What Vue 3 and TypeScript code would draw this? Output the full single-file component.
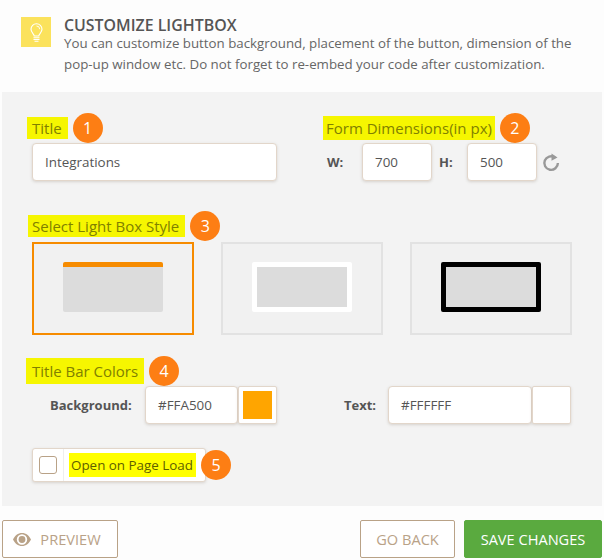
<script setup lang="ts">
const styles = ['bar', 'white', 'black']
</script>

<template>
  <div class="page">
    <header class="head">
      <div class="tip">
        <svg width="13" height="19" viewBox="0 0 13 19" fill="none" stroke="#fff" stroke-width="1.100">
          <path d="M4.200 13c0-1.900-3.200-3.300-3.200-6.700a5.500 5.500 0 0 1 11 0c0 3.400-3.200 4.800-3.200 6.700z" />
          <path d="M6.500 3a3.200 3.200 0 0 1 3.200 3.200" stroke-width="0.900" />
          <path d="M3.500 14.800h6M3.500 16.500h6M4.500 18.300h4" />
        </svg>
      </div>
      <div class="head-text">
        <h1>CUSTOMIZE LIGHTBOX</h1>
        <p>You can customize button background, placement of the button, dimension of the pop-up window etc. Do not forget to re-embed your code after customization.</p>
      </div>
    </header>

    <main class="panel">
      <div class="row-top">
        <section class="col-title">
          <div class="label-line"><span class="mark mark-title">Title&nbsp;</span><span class="badge">1</span></div>
          <div class="field title-field">Integrations</div>
        </section>
        <section class="col-dim">
          <div class="label-line"><span class="mark mark-form">Form Dimensions(in px)</span><span class="badge">2</span></div>
          <div class="dims">
            <b class="w-label">W:</b>
            <div class="field dim">700</div>
            <b class="h-label">H:</b>
            <div class="field dim">500</div>
            <svg class="reset" width="18" height="22" viewBox="0 0 18 22" fill="none">
              <path d="M12.900 6.400a6.800 6.800 0 1 0 3 5.600" stroke="#999" stroke-width="2.400" />
              <path d="M9.500 2.600l6 3.800-6 3.400z" fill="#999" />
            </svg>
          </div>
        </section>
      </div>

      <section class="style-section">
        <div class="label-line"><span class="mark mark-style">Select Light Box Style</span><span class="badge">3</span></div>
        <div class="cards">
          <div v-for="(s, i) in styles" :key="s" class="card" :class="{ active: i === 0 }">
            <div class="mini" :class="s"></div>
          </div>
        </div>
      </section>

      <section class="colors">
        <div class="label-line"><span class="mark mark-colors">Title Bar Colors</span><span class="badge">4</span></div>
        <div class="color-row">
          <b class="bg-label">Background:</b>
          <div class="field hex bg-hex">#FFA500</div>
          <div class="swatch"><i class="orange"></i></div>
          <b class="text-label">Text:</b>
          <div class="field hex text-hex">#FFFFFF</div>
          <div class="swatch"></div>
        </div>
      </section>

      <div class="load-line">
        <div class="load">
          <div class="check-cell"><span class="check"></span></div>
          <span class="mark load-mark">Open on Page Load</span>
        </div>
        <span class="badge">5</span>
      </div>
    </main>

    <footer class="foot">
      <button class="btn preview">
        <svg width="18" height="13" viewBox="0 0 18 13" fill="#b9a287">
          <path fill-rule="evenodd" d="M9 0c4 0 7.300 2.700 9 6.500-1.700 3.800-5 6.500-9 6.500s-7.300-2.700-9-6.500C1.700 2.700 5 0 9 0zm0 1.300a5.200 5.200 0 1 0 0 10.400 5.200 5.200 0 0 0 0-10.400z" />
          <circle cx="9" cy="6.500" r="3.400" />
        </svg>
        PREVIEW
      </button>
      <div class="foot-right">
        <button class="btn back">GO BACK</button>
        <button class="btn save">SAVE CHANGES</button>
      </div>
    </footer>
  </div>
</template>

<style>
html, body { margin: 0; background: #fdfdfd; }
</style>

<style scoped>
.page {
  width: 604px;
  height: 560px;
  overflow: hidden;
  font-family: "Open Sans", sans-serif;
  color: #555;
  background: #fdfdfd;
}
.head {
  height: 92px;
  box-sizing: border-box;
  padding: 17px 20px 0 21px;
  display: flex;
  gap: 13px;
}
.tip {
  width: 30px;
  height: 30px;
  flex: none;
  background: #fbe25c;
  display: flex;
  align-items: center;
  justify-content: center;
}
h1 {
  margin: 0;
  font-size: 15.900px;
  line-height: 16px;
  font-weight: 600;
  color: #555;
}
.head-text p {
  margin: 0;
  font-size: 13.300px;
  line-height: 21px;
  color: #666;
}
.panel {
  margin: 0 2px;
  width: 600px;
  height: 414px;
  box-sizing: border-box;
  padding: 21px 0 0 30px;
  background: #f3f3f3;
}
.label-line {
  display: flex;
  align-items: center;
  height: 30px;
}
.mark {
  background: #f6f600;
  color: #808000;
  font-size: 15px;
  line-height: 22px;
  white-space: nowrap;
}
.mark-title { margin-left: -5px; padding: 0 2px 0 5px; }
.mark-form { margin-left: -3px; padding: 1px 3px; }
.mark-style { margin-left: -4px; padding: 0 6px 0 4px; }
.mark-colors { margin-left: -6px; padding: 2px 6px 2px 6px; }
.badge {
  width: 30px;
  height: 30px;
  flex: none;
  margin-left: 5px;
  border-radius: 50%;
  background: #fd7e14;
  color: #fff;
  font-size: 16px;
  display: flex;
  align-items: center;
  justify-content: center;
}
.row-top {
  display: flex;
}
.col-title {
  width: 294px;
}
.field {
  box-sizing: border-box;
  height: 38px;
  background: #fff;
  border: 1px solid #e2d6ca;
  border-radius: 4px;
  box-shadow: 0 1px 3px rgba(120, 100, 80, 0.22);
  font-size: 13.400px;
  line-height: 36px;
  color: #555;
  padding-left: 12px;
}
.title-field {
  width: 245px;
}
.dims {
  display: flex;
  align-items: center;
  margin-left: 1px;
}
.dims b,
.color-row b {
  font-size: 13px;
  color: #555;
}
.w-label { width: 35px; }
.h-label { width: 28px; margin-left: 7px; }
.dim { width: 70px; }
.reset { margin-left: 5px; }
.style-section {
  margin-top: 30px;
}
.cards {
  display: flex;
  gap: 27px;
  margin-top: 1px;
}
.card {
  box-sizing: border-box;
  width: 162px;
  height: 93px;
  border: 2px solid #e2e2e2;
  background: #f1f1f1;
  padding-top: 18px;
  display: flex;
  align-items: flex-start;
  justify-content: center;
}
.card.active { border-color: #f68b00; }
.mini {
  box-sizing: border-box;
  width: 100px;
  height: 50px;
  background: #dcdcdc;
  border-radius: 2px;
}
.mini.bar { border-top: 5px solid #f68b00; }
.mini.white { border: 5px solid #fff; }
.mini.black { border: 5px solid #000; }
.colors {
  margin-top: 21px;
}
.color-row {
  display: flex;
  align-items: center;
}
.bg-label { margin-left: 18px; width: 95px; }
.bg-hex { width: 93px; }
.text-hex { width: 144px; }
.swatch {
  box-sizing: border-box;
  width: 39px;
  height: 38px;
  background: #fff;
  border: 1px solid #e2d6ca;
  border-radius: 2px;
  box-shadow: 0 1px 3px rgba(120, 100, 80, 0.22);
  padding: 4px;
}
.orange {
  display: block;
  width: 100%;
  height: 100%;
  background: #ffa500;
}
.text-label { margin-left: 67px; width: 44px; }
.load-line {
  display: flex;
  align-items: center;
  margin-top: 24px;
}
.load {
  box-sizing: border-box;
  width: 174px;
  height: 34px;
  display: flex;
  align-items: center;
  background: #fff;
  border: 1px solid #e2d6ca;
  border-radius: 3px;
  box-shadow: 0 1px 3px rgba(120, 100, 80, 0.22);
}
.load + .badge { margin-left: -5px; }
.check-cell {
  width: 30px;
  height: 100%;
  flex: none;
  border-right: 1px solid #eee;
  display: flex;
  align-items: center;
  justify-content: center;
}
.check {
  box-sizing: border-box;
  width: 18px;
  height: 18px;
  border: 1px solid #b9a287;
  border-radius: 3px;
  background: #fff;
}
.load-mark {
  margin-left: 5px;
  padding: 0 3px 0 2px;
  color: #5e5e00;
  font-size: 13.400px;
  line-height: 24px;
  background: #ffff00;
}
.foot {
  display: flex;
  justify-content: space-between;
  padding: 14px 2px 0;
}
.foot-right {
  display: flex;
  gap: 9px;
}
.btn {
  box-sizing: border-box;
  height: 38px;
  border-radius: 2px;
  font-family: inherit;
  font-size: 14.600px;
  background: #fff;
  border: 1px solid #b9a287;
  color: #b9a287;
  padding: 0;
  display: flex;
  align-items: center;
  justify-content: center;
  gap: 9px;
}
.preview { width: 116px; padding-right: 6px; }
.back { width: 95px; }
.save {
  width: 138px;
  background: #5aaa3f;
  border-color: #5aaa3f;
  color: #fff;
}
</style>
